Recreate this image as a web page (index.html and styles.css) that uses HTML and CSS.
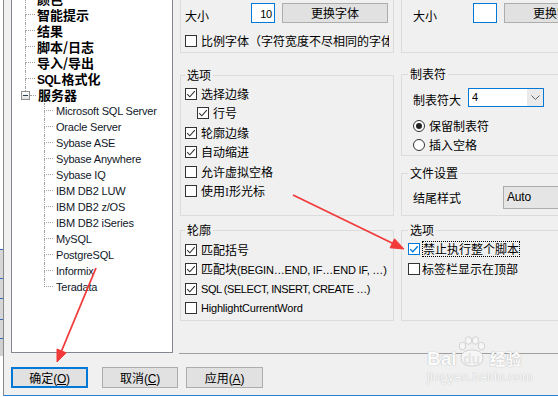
FILE: index.html
```html
<!DOCTYPE html>
<html lang="zh-CN">
<head>
<meta charset="utf-8">
<title>选项</title>
<link rel="stylesheet" href="styles.css">
</head>
<body>
<div class="screen">
  <div class="outside"></div>
  <div class="dialog">
    <div class="main">
      <div class="tree">
        <ul class="l1">
          <li class="row"><span class="c"><b class="t"></b><b class="b"></b></span><span class="lbl">颜色</span></li>
          <li class="row"><span class="c"><b class="t"></b><b class="b"></b></span><span class="lbl">智能提示</span></li>
          <li class="row"><span class="c"><b class="t"></b><b class="b"></b></span><span class="lbl">结果</span></li>
          <li class="row"><span class="c"><b class="t"></b><b class="b"></b></span><span class="lbl">脚本/日志</span></li>
          <li class="row"><span class="c"><b class="t"></b><b class="b"></b></span><span class="lbl">导入/导出</span></li>
          <li class="row"><span class="c"><b class="t"></b><b class="b"></b></span><span class="lbl"><span class="enb">SQL</span>格式化</span></li>
          <li class="row srv"><span class="pmw"><b class="up"></b><span class="pm"><i></i></span></span><b class="hl"></b><span class="lbl">服务器</span></li>
        </ul>
        <ul class="l2">
          <li class="row"><span class="c"><b class="t"></b><b class="b"></b></span><span class="sub">Microsoft SQL Server</span></li>
          <li class="row"><span class="c"><b class="t"></b><b class="b"></b></span><span class="sub">Oracle Server</span></li>
          <li class="row"><span class="c"><b class="t"></b><b class="b"></b></span><span class="sub">Sybase ASE</span></li>
          <li class="row"><span class="c"><b class="t"></b><b class="b"></b></span><span class="sub">Sybase Anywhere</span></li>
          <li class="row"><span class="c"><b class="t"></b><b class="b"></b></span><span class="sub">Sybase IQ</span></li>
          <li class="row"><span class="c"><b class="t"></b><b class="b"></b></span><span class="sub">IBM DB2 LUW</span></li>
          <li class="row"><span class="c"><b class="t"></b><b class="b"></b></span><span class="sub">IBM DB2 z/OS</span></li>
          <li class="row"><span class="c"><b class="t"></b><b class="b"></b></span><span class="sub">IBM DB2 iSeries</span></li>
          <li class="row"><span class="c"><b class="t"></b><b class="b"></b></span><span class="sub">MySQL</span></li>
          <li class="row"><span class="c"><b class="t"></b><b class="b"></b></span><span class="sub">PostgreSQL</span></li>
          <li class="row"><span class="c"><b class="t"></b><b class="b"></b></span><span class="sub">Informix</span></li>
          <li class="row last"><span class="c"><b class="t"></b><b class="b"></b></span><span class="sub">Teradata</span></li>
        </ul>
      </div>

      <div class="pages">
        <div class="col left">
          <fieldset class="g g1">
            <div class="frow"><span class="lab">大小</span><span class="num"><span class="en">10</span></span><span class="fbtn">更换字体</span></div>
            <div class="chk prop"><span class="cb"></span><span class="txt">比例字体（字符宽度不尽相同的字体）</span></div>
          </fieldset>

          <fieldset class="g g2">
            <legend>选项</legend>
            <div class="chk"><span class="cb on"><svg viewBox="0 0 10 10"><path d="M1.2 5.2 L3.8 7.8 L8.8 2.2"/></svg></span><span class="txt">选择边缘</span></div>
            <div class="chk ind"><span class="cb on"><svg viewBox="0 0 10 10"><path d="M1.2 5.2 L3.8 7.8 L8.8 2.2"/></svg></span><span class="txt">行号</span></div>
            <div class="chk"><span class="cb on"><svg viewBox="0 0 10 10"><path d="M1.2 5.2 L3.8 7.8 L8.8 2.2"/></svg></span><span class="txt">轮廓边缘</span></div>
            <div class="chk"><span class="cb on"><svg viewBox="0 0 10 10"><path d="M1.2 5.2 L3.8 7.8 L8.8 2.2"/></svg></span><span class="txt">自动缩进</span></div>
            <div class="chk"><span class="cb"></span><span class="txt">允许虚拟空格</span></div>
            <div class="chk"><span class="cb"></span><span class="txt">使用<span class="lat">I</span>形光标</span></div>
          </fieldset>

          <fieldset class="g g3">
            <legend>轮廓</legend>
            <div class="chk"><span class="cb on"><svg viewBox="0 0 10 10"><path d="M1.2 5.2 L3.8 7.8 L8.8 2.2"/></svg></span><span class="txt">匹配括号</span></div>
            <div class="chk"><span class="cb on"><svg viewBox="0 0 10 10"><path d="M1.2 5.2 L3.8 7.8 L8.8 2.2"/></svg></span><span class="txt">匹配块<span class="en">(BEGIN…END, IF…END IF, …)</span></span></div>
            <div class="chk"><span class="cb on"><svg viewBox="0 0 10 10"><path d="M1.2 5.2 L3.8 7.8 L8.8 2.2"/></svg></span><span class="txt en tight">SQL (SELECT, INSERT, CREATE …)</span></div>
            <div class="chk"><span class="cb"></span><span class="txt en">HighlightCurrentWord</span></div>
          </fieldset>
        </div>

        <div class="col right">
          <fieldset class="g g1">
            <div class="frow"><span class="lab r">大小</span><span class="num r"></span><span class="fbtn">更换字体</span></div>
            <div class="spacer"></div>
          </fieldset>

          <fieldset class="g r2">
            <legend>制表符</legend>
            <div class="crow"><span class="lab r">制表符大</span><span class="combo"><span class="cv en">4</span><span class="dd"><svg viewBox="0 0 9 5"><path d="M0.5 0.5 L4.5 4.5 L8.5 0.5"/></svg></span></span></div>
            <div class="rad first"><span class="rb on"><i></i></span><span class="txt">保留制表符</span></div>
            <div class="rad"><span class="rb"></span><span class="txt">插入空格</span></div>
          </fieldset>

          <fieldset class="g r3">
            <legend>文件设置</legend>
            <div class="crow tall"><span class="lab r">结尾样式</span><span class="combo ro"><span class="cv en">Auto</span></span></div>
          </fieldset>

          <fieldset class="g r4">
            <legend>选项</legend>
            <div class="chk"><span class="cb on focus"><svg viewBox="0 0 10 10"><path d="M1.2 5.2 L3.8 7.8 L8.8 2.2"/></svg></span><span class="txt fr">禁止执行整个脚本</span></div>
            <div class="chk"><span class="cb"></span><span class="txt">标签栏显示在顶部</span></div>
          </fieldset>
        </div>
      </div>
    </div>

    <div class="buttons">
      <span class="btn ok">确定<span class="en">(<u>O</u>)</span></span>
      <span class="btn cancel">取消<span class="en">(<u>C</u>)</span></span>
      <span class="btn apply">应用<span class="en">(<u>A</u>)</span></span>
    </div>
  </div>

  <svg class="ann" width="558" height="397" viewBox="0 0 558 397">
    <line x1="96" y1="268" x2="60.5" y2="353.5"/>
    <polygon points="57,362 66.2,352.8 57,349"/>
    <line x1="293" y1="195" x2="394" y2="244"/>
    <polygon points="404,249 390.1,247.8 394.5,238.8"/>
  </svg>

  <div class="wm">
    <div class="wm-top">
      <span class="bai">Bai</span>
      <span class="paw">
        <svg viewBox="0 0 28 31" width="28" height="31">
          <ellipse cx="4.5" cy="10" rx="3.2" ry="3.8"/>
          <ellipse cx="10.5" cy="4.5" rx="3.2" ry="3.8"/>
          <ellipse cx="17.5" cy="4.5" rx="3.2" ry="3.8"/>
          <ellipse cx="23.5" cy="10" rx="3.2" ry="3.8"/>
          <path d="M3 22 Q3 14 14 14 Q25 14 25 22 Q25 30 14 30 Q3 30 3 22 Z"/>
        </svg>
        <span class="du">du</span>
      </span>
      <span class="jy">经验</span>
    </div>
    <div class="wm-url">jingyan.baidu.com</div>
  </div>
</div>
</body>
</html>
```
FILE: styles.css
```css
* { box-sizing: border-box; }
html, body { margin: 0; padding: 0; }
body {
  width: 558px;
  height: 397px;
  overflow: hidden;
  background: #fff;
  font-family: "Noto Sans CJK SC", "Liberation Sans", sans-serif;
  font-size: 12px;
  color: #000;
}
.en {
  font-family: "Liberation Sans", "Noto Sans CJK SC", sans-serif;
  font-size: 11px;
  letter-spacing: -0.2px;
}
.screen {
  position: relative;
  display: flex;
  width: 558px;
  height: 397px;
  overflow: hidden;
}
.outside {
  width: 3px;
  flex: none;
  background: linear-gradient(to bottom,
    #fff 0 249px, #3a66b8 249px 250px, #d6d6d6 250px 278px,
    #3a66b8 278px 279px, #d6d6d6 279px 298px, #3a66b8 298px 299px,
    #d6d6d6 299px 319px, #3a66b8 319px 320px, #d6d6d6 320px 338px,
    #3a66b8 338px 339px, #d0d0d0 339px 356px, #fff 356px);
}
.dialog {
  flex: none;
  width: 555px;
  height: 396px;
  background: #f0f0f0;
  border-left: 1px solid #8a8a8a;
  border-bottom: 1px solid #2a7fd3;
  padding-left: 7px;
  display: flex;
  flex-direction: column;
}
.main {
  display: flex;
  align-items: flex-start;
  margin-top: -44px;
}

/* ---------- tree ---------- */
.tree {
  flex: none;
  width: 162px;
  height: 397px;
  background: #fff;
  border: 1px solid #828790;
  padding-top: 34px;
  overflow: hidden;
}
.tree ul { list-style: none; margin: 0; padding: 0; }
.tree .l1 { padding-left: 13px; }
.tree .l2 { padding-left: 32px; }
.row {
  display: flex;
  align-items: center;
  height: 16px;
  white-space: nowrap;
}
.c {
  flex: none;
  display: flex;
  flex-direction: column;
  width: 10px;
  height: 16px;
}
.l2 .c { width: 9px; }
.c .t {
  height: 8px;
  border-left: 1px dotted #a0a0a0;
  border-bottom: 1px dotted #a0a0a0;
}
.c .b {
  height: 8px;
  border-left: 1px dotted #a0a0a0;
}
.last .c .b { border-left: 0; }
.lbl {
  margin-left: 2px;
  font-weight: bold;
  font-size: 13px;
  line-height: 16px;
}
.enb {
  font-family: "Liberation Sans", sans-serif;
  font-size: 12px;
  letter-spacing: -0.4px;
  margin-right: 1px;
}
.sub {
  margin-left: 3px;
  font-family: "Liberation Sans", sans-serif;
  font-size: 11px;
  letter-spacing: -0.2px;
  line-height: 16px;
  color: #101828;
}
.srv { margin-left: -4px; }
.pmw {
  flex: none;
  display: flex;
  flex-direction: column;
  width: 9px;
  height: 16px;
}
.pmw .up {
  width: 5px;
  height: 4px;
  border-right: 1px dotted #a0a0a0;
}
.pm {
  width: 9px;
  height: 9px;
  border: 1px solid #8f8f8f;
  background: linear-gradient(#ffffff, #e3e3e3);
  display: flex;
  align-items: center;
  justify-content: center;
}
.pm i {
  display: block;
  width: 5px;
  height: 1px;
  background: #2b3a55;
}
.hl {
  flex: none;
  width: 6px;
  height: 1px;
  border-top: 1px dotted #a0a0a0;
}

/* ---------- pages ---------- */
.pages {
  flex: 1;
  min-width: 0;
  margin-left: 6px;
  height: 398px;
  border-bottom: 1px solid #a0a0a0;
  padding-left: 1px;
  display: flex;
  align-items: flex-start;
  gap: 7px;
  overflow: hidden;
}
.col { flex: none; display: flex; flex-direction: column; }
.col.left { width: 214px; }
.col.right { width: 230px; }

.g {
  flex: none;
  margin: 0;
  min-width: 0;
  border: 1px solid #dcdcdc;
  padding: 0 4px;
}
.right .g { padding-left: 6px; }
.g legend {
  padding: 0 2px;
  height: 16px;
  line-height: 16px;
  font-size: 12px;
}
.g1 { padding-top: 46px; padding-bottom: 3px; }
.g2 { margin-top: 14px; padding-top: 1px; padding-bottom: 14px; }
.g3 { margin-top: 6px; padding-top: 2px; padding-bottom: 2px; }
.r2 { margin-top: 13px; padding-top: 6px; padding-bottom: 0; }
.r3 { margin-top: 9px; padding-top: 5px; padding-bottom: 6px; }
.r4 { margin-top: 6px; padding-top: 1px; padding-bottom: 41px; }

.frow {
  display: flex;
  align-items: flex-start;
  height: 20px;
}
.lab {
  flex: none;
  margin-top: 5px;
  line-height: 16px;
}
.lab.r { margin-left: 5px; }
.num {
  flex: none;
  width: 24px;
  height: 20px;
  margin-left: 42px;
  border: 1px solid #0078d7;
  background: #fff;
  text-align: right;
  padding-right: 2px;
  line-height: 18px;
}
.num.r { margin-left: 36px; }
.fbtn {
  flex: none;
  width: 106px;
  height: 20px;
  margin-left: 7px;
  background: #e1e1e1;
  border: 1px solid #adadad;
  text-align: center;
  line-height: 18px;
}
.spacer { height: 26px; }

.chk {
  display: flex;
  align-items: center;
  height: 19.5px;
  white-space: nowrap;
  overflow: hidden;
}
.chk.prop { margin-top: 10px; height: 16px; }
.chk.ind { padding-left: 12px; }
.r4 .chk { height: 20px; }
.cb {
  flex: none;
  width: 12px;
  height: 12px;
  margin-right: 4px;
  border: 1px solid #333;
  background: #fff;
  display: flex;
  align-items: center;
  justify-content: center;
}
.cb svg { width: 10px; height: 10px; }
.cb svg path { fill: none; stroke: #333; stroke-width: 1.1; }
.cb.focus { border-color: #0078d7; }
.cb.focus svg path { stroke: #0078d7; stroke-width: 1.3; }
.r4 .cb { margin-right: 2px; }
.txt { line-height: 16px; }
.txt.en { font-size: 11px; }
.txt.tight { letter-spacing: -0.45px; }
.txt .lat { font-family: "Liberation Serif", serif; color: #223; }
.fr {
  outline: 1px dotted #000;
  outline-offset: -1px;
  padding: 0 1px;
}

.crow {
  display: flex;
  align-items: flex-start;
  height: 19px;
}
.crow .lab { margin-top: 4px; }
.crow.tall { height: 23px; }
.combo {
  flex: none;
  display: flex;
  width: 76px;
  height: 19px;
  margin-left: 7px;
  border: 1px solid #0078d7;
  background: #fff;
}
.cv { flex: 1; padding-left: 3px; line-height: 17px; }
.dd {
  flex: none;
  width: 16px;
  background: #eaeaea;
  display: flex;
  align-items: center;
  justify-content: center;
}
.dd svg { width: 9px; height: 5px; }
.dd svg path { fill: none; stroke: #606060; stroke-width: 1; }
.combo.ro {
  width: 120px;
  height: 23px;
  margin-left: 42px;
  border-color: #acacac;
  background: #e5e5e5;
}
.combo.ro .cv { line-height: 21px; font-size: 12px; }

.rad {
  display: flex;
  align-items: center;
  height: 19.5px;
  padding-left: 5px;
}
.rad.first { margin-top: 9px; }
.rb {
  flex: none;
  width: 12px;
  height: 12px;
  margin-right: 4px;
  border: 1px solid #333;
  border-radius: 50%;
  background: #fff;
  display: flex;
  align-items: center;
  justify-content: center;
}
.rb i {
  display: block;
  width: 6px;
  height: 6px;
  border-radius: 50%;
  background: #222;
}

/* ---------- buttons ---------- */
.buttons {
  display: flex;
  margin-top: 13px;
}
.btn {
  flex: none;
  height: 21px;
  background: #e1e1e1;
  border: 1px solid #adadad;
  text-align: center;
  line-height: 19px;
}
.btn .en { font-size: 12px; }
.btn u { text-decoration-thickness: 1px; text-underline-offset: 1px; }
.ok { width: 77px; border: 2px solid #0078d7; line-height: 17px; }
.cancel { width: 76px; margin-left: 14px; }
.apply { width: 77px; margin-left: 8px; }

/* ---------- annotations ---------- */
.ann {
  position: absolute;
  left: 0;
  top: 0;
  pointer-events: none;
}
.ann line { stroke: #f23a3a; stroke-width: 1.8; }
.ann polygon { fill: #f23a3a; stroke: #f23a3a; stroke-width: 1; stroke-linejoin: round; }

.wm {
  position: absolute;
  left: 427px;
  top: 335px;
  color: #fbfbfb;
  pointer-events: none;
}
.wm-top {
  display: flex;
  align-items: flex-end;
  height: 33px;
}
.bai {
  font-family: "Liberation Sans", sans-serif;
  font-weight: bold;
  font-size: 19px;
  line-height: 19px;
  text-shadow: 0 0 1px #bdbdbd, 0 0 1px #bdbdbd;
}
.paw {
  position: relative;
  display: flex;
  width: 28px;
  height: 33px;
  margin-left: 1px;
  align-items: flex-end;
  justify-content: center;
}
.paw svg { position: absolute; left: 0; top: 1px; }
.paw svg ellipse, .paw svg path { fill: #f6f6f6; stroke: #d2d2d2; stroke-width: 1; }
.du {
  position: relative;
  font-family: "Liberation Sans", sans-serif;
  font-weight: bold;
  font-size: 14px;
  line-height: 17px;
  color: #e4e4e4;
}
.jy {
  margin-left: 4px;
  font-weight: bold;
  font-size: 16px;
  line-height: 19px;
  text-shadow: 0 0 1px #bdbdbd, 0 0 1px #bdbdbd;
}
.wm-url {
  margin-top: 3px;
  font-family: "Liberation Sans", sans-serif;
  font-size: 12.5px;
  line-height: 13px;
  letter-spacing: 0.3px;
  text-shadow: 0 0 1px #c4c4c4, 0 0 1px #c4c4c4;
}
```
